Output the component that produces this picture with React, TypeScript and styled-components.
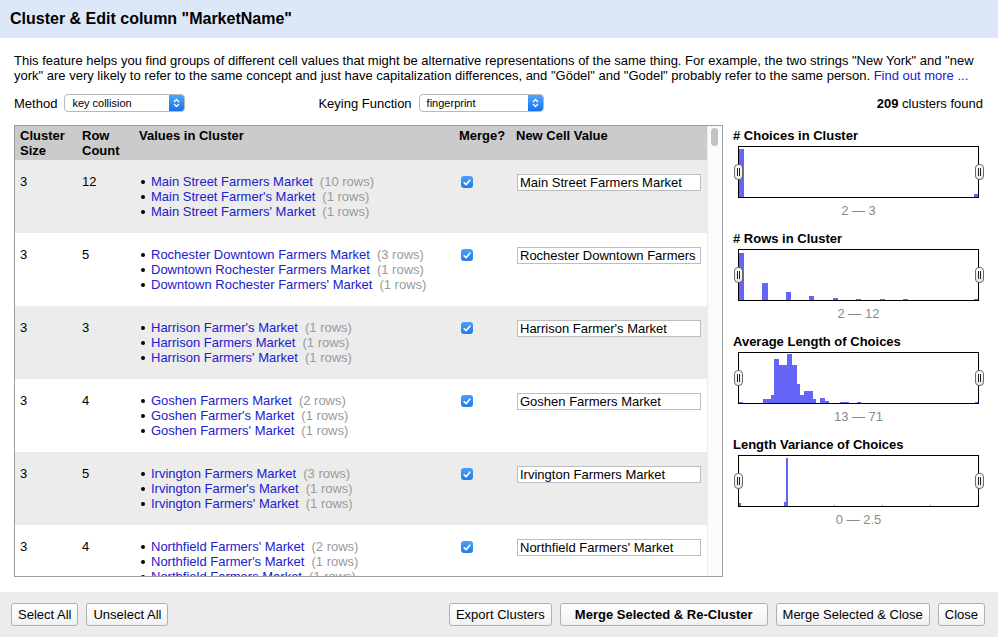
import React from 'react';
import styled, { createGlobalStyle } from 'styled-components';

// -- data --

type Cluster = {
  size: number;
  count: number;
  values: [string, number][];
  newValue: string;
};

const CLUSTERS: Cluster[] = [
  {
    size: 3,
    count: 12,
    values: [
      ['Main Street Farmers Market', 10],
      ["Main Street Farmer's Market", 1],
      ["Main Street Farmers' Market", 1],
    ],
    newValue: 'Main Street Farmers Market',
  },
  {
    size: 3,
    count: 5,
    values: [
      ['Rochester Downtown Farmers Market', 3],
      ['Downtown Rochester Farmers Market', 1],
      ["Downtown Rochester Farmers' Market", 1],
    ],
    newValue: 'Rochester Downtown Farmers Market',
  },
  {
    size: 3,
    count: 3,
    values: [
      ["Harrison Farmer's Market", 1],
      ['Harrison Farmers Market', 1],
      ["Harrison Farmers' Market", 1],
    ],
    newValue: "Harrison Farmer's Market",
  },
  {
    size: 3,
    count: 4,
    values: [
      ['Goshen Farmers Market', 2],
      ["Goshen Farmer's Market", 1],
      ["Goshen Farmers' Market", 1],
    ],
    newValue: 'Goshen Farmers Market',
  },
  {
    size: 3,
    count: 5,
    values: [
      ['Irvington Farmers Market', 3],
      ["Irvington Farmer's Market", 1],
      ["Irvington Farmers' Market", 1],
    ],
    newValue: 'Irvington Farmers Market',
  },
  {
    size: 3,
    count: 4,
    values: [
      ["Northfield Farmers' Market", 2],
      ["Northfield Farmer's Market", 1],
      ['Northfield Farmers Market', 1],
    ],
    newValue: "Northfield Farmers' Market",
  },
];

// bars are [x, width, height] inside a 239 x 50 plot
type Bar = [number, number, number];

const FACETS: { title: string; range: string; bars: Bar[] }[] = [
  {
    title: '# Choices in Cluster',
    range: '2 \u2014 3',
    bars: [
      [0, 5, 48],
      [235, 4, 3],
    ],
  },
  {
    title: '# Rows in Cluster',
    range: '2 \u2014 12',
    bars: [
      [0, 5, 47],
      [23, 6, 17],
      [47, 5, 8],
      [70, 5, 4],
      [94, 5, 2],
      [117, 5, 1],
      [141, 5, 1],
      [164, 5, 1],
      [235, 4, 1],
    ],
  },
  {
    title: 'Average Length of Choices',
    range: '13 \u2014 71',
    bars: [
      [0, 4, 1],
      [24, 8, 4],
      [32, 3, 8],
      [35, 5, 44],
      [40, 8, 38],
      [48, 5, 49],
      [53, 5, 38],
      [58, 3, 19],
      [61, 4, 8],
      [65, 9, 12],
      [74, 3, 4],
      [81, 5, 5],
      [86, 4, 2],
      [101, 9, 1],
      [118, 4, 1],
      [236, 3, 1],
    ],
  },
  {
    title: 'Length Variance of Choices',
    range: '0 \u2014 2.5',
    bars: [
      [0, 2, 3],
      [45, 2, 4],
      [47, 2, 48],
      [95, 1, 1],
      [143, 1, 1],
      [191, 1, 1],
      [238, 1, 1],
    ],
  },
];

// -- small parts --

const SelectArrows: React.FC = () => (
  <svg width="7" height="10" viewBox="0 0 7 10">
    <path d="M1 4 L3.5 1.5 L6 4 M1 6 L3.5 8.5 L6 6" fill="none" stroke="#fff" strokeWidth="1.3" />
  </svg>
);

const CheckMark: React.FC = () => (
  <svg width="8" height="7" viewBox="0 0 8 7">
    <path d="M1.2 3.8 L3.2 5.6 L6.8 1.2" fill="none" stroke="#fff" strokeWidth="1.6" strokeLinecap="round" />
  </svg>
);

const Facet: React.FC<{ title: string; range: string; bars: Bar[] }> = ({ title, range, bars }) => (
  <FacetBlock>
    <FacetTitle>{title}</FacetTitle>
    <ChartBox>
      <svg width="239" height="50" viewBox="0 0 239 50">
        {bars.map(([x, w, h], i) => (
          <rect key={i} x={x} y={50 - h} width={w} height={h} fill="#6464f6" />
        ))}
      </svg>
      <Handle side="left" />
      <Handle side="right" />
    </ChartBox>
    <RangeLabel>{range}</RangeLabel>
  </FacetBlock>
);

// -- main component --

const App: React.FC = () => {
  return (
    <>
      <GlobalStyle />
      <Dialog>
        <Header>Cluster &amp; Edit column "MarketName"</Header>
        <Body>
          <Intro>
            This feature helps you find groups of different cell values that might be alternative representations of the
            same thing. For example, the two strings "New York" and "new
            <br />
            york" are very likely to refer to the same concept and just have capitalization differences, and "Gödel" and
            "Godel" probably refer to the same person. <Link>Find out more ...</Link>
          </Intro>

          <Controls>
            <ControlGroup>
              Method
              <Select width={121}>
                <SelectText>key collision</SelectText>
                <SelectButton>
                  <SelectArrows />
                </SelectButton>
              </Select>
            </ControlGroup>
            <ControlGroup offset={133}>
              Keying Function
              <Select width={125}>
                <SelectText>fingerprint</SelectText>
                <SelectButton>
                  <SelectArrows />
                </SelectButton>
              </Select>
            </ControlGroup>
            <Found>
              <b>209</b> clusters found
            </Found>
          </Controls>

          <Main>
            <TableBox>
              <TableScroll>
                <HeadRow>
                  <HeadCell>
                    Cluster
                    <br />
                    Size
                  </HeadCell>
                  <HeadCell>
                    Row
                    <br />
                    Count
                  </HeadCell>
                  <HeadCell>Values in Cluster</HeadCell>
                  <HeadCell>Merge?</HeadCell>
                  <HeadCell>New Cell Value</HeadCell>
                </HeadRow>
                {CLUSTERS.map((c, i) => (
                  <Row key={i} shaded={i % 2 === 0}>
                    <Cell>{c.size}</Cell>
                    <Cell>{c.count}</Cell>
                    <Cell>
                      <ValueList>
                        {c.values.map(([name, n]) => (
                          <ValueItem key={name}>
                            <Link>{name}</Link>
                            <RowCount>({n} rows)</RowCount>
                          </ValueItem>
                        ))}
                      </ValueList>
                    </Cell>
                    <Cell>
                      <Check>
                        <CheckMark />
                      </Check>
                    </Cell>
                    <Cell>
                      <ValueInput defaultValue={c.newValue} />
                    </Cell>
                  </Row>
                ))}
              </TableScroll>
              <ScrollTrack>
                <ScrollThumb />
              </ScrollTrack>
            </TableBox>

            <Facets>
              {FACETS.map((f) => (
                <Facet key={f.title} {...f} />
              ))}
            </Facets>
          </Main>
        </Body>

        <Footer>
          <ButtonGroup>
            <Button>Select All</Button>
            <Button>Unselect All</Button>
          </ButtonGroup>
          <ButtonGroup>
            <Button>Export Clusters</Button>
            <Button primary>Merge Selected &amp; Re-Cluster</Button>
            <Button>Merge Selected &amp; Close</Button>
            <Button>Close</Button>
          </ButtonGroup>
        </Footer>
      </Dialog>
    </>
  );
};

// -- styled components --

const GlobalStyle = createGlobalStyle`
  html, body {
    margin: 0;
    padding: 0;
    background: #fff;
  }
  body {
    font-family: "Liberation Sans", Arial, sans-serif;
    font-size: 13px;
    color: #000;
  }
`;

const Dialog = styled.div`
  width: 998px;
  height: 637px;
  display: flex;
  flex-direction: column;
  overflow: hidden;
`;

const Header = styled.div`
  height: 38px;
  flex: none;
  display: flex;
  align-items: center;
  padding: 0 0 0 10px;
  background: #dce8f8;
  font-size: 16px;
  font-weight: bold;
`;

const Body = styled.div`
  flex: 1;
  min-height: 0;
  padding: 15px 14px 0 14px;
  display: flex;
  flex-direction: column;
`;

const Intro = styled.p`
  margin: 0;
  line-height: 15px;
  white-space: nowrap;
`;

const Link = styled.span`
  color: #2020cc;
`;

const Controls = styled.div`
  margin-top: 10px;
  height: 20px;
  display: flex;
  align-items: center;
`;

const ControlGroup = styled.div<{ offset?: number }>`
  display: flex;
  align-items: center;
  gap: 7px;
  margin-left: ${(p) => p.offset || 0}px;
`;

const Select = styled.div<{ width: number }>`
  width: ${(p) => p.width}px;
  height: 18px;
  box-sizing: border-box;
  display: flex;
  border: 1px solid #b9b9b9;
  border-radius: 4px;
  background: #fff;
  overflow: hidden;
  font-size: 11px;
`;

const SelectText = styled.div`
  flex: 1;
  padding-left: 7px;
  display: flex;
  align-items: center;
`;

const SelectButton = styled.div`
  width: 15px;
  display: flex;
  align-items: center;
  justify-content: center;
  background: linear-gradient(#52a4fb, #1873ea);
`;

const Found = styled.div`
  margin-left: auto;
  padding-right: 1px;
`;

const Main = styled.div`
  margin-top: 12px;
  display: flex;
  gap: 10px;
`;

const TableBox = styled.div`
  width: 709px;
  height: 452px;
  box-sizing: border-box;
  flex: none;
  display: flex;
  border: 1px solid #9d9d9d;
  background: #fff;
`;

const TableScroll = styled.div`
  flex: 1;
  overflow: hidden;
`;

const COLUMNS = '62px 57px 320px 57px 1fr';

const HeadRow = styled.div`
  display: grid;
  grid-template-columns: ${COLUMNS};
  height: 34px;
  background: #cbcbcb;
  font-weight: bold;
  line-height: 15px;
`;

const HeadCell = styled.div`
  padding: 2px 5px 0 5px;
`;

const Row = styled.div<{ shaded: boolean }>`
  display: grid;
  grid-template-columns: ${COLUMNS};
  height: 73px;
  box-sizing: border-box;
  padding-top: 14px;
  line-height: 15px;
  background: ${(p) => (p.shaded ? '#ececec' : '#fff')};
`;

const Cell = styled.div`
  padding: 0 5px;
  min-width: 0;
`;

const ValueList = styled.div`
  display: flex;
  flex-direction: column;
`;

const ValueItem = styled.div`
  display: flex;
  align-items: center;
  white-space: nowrap;

  &::before {
    content: '';
    width: 4px;
    height: 4px;
    border-radius: 50%;
    background: #000;
    margin: 0 6px 0 2px;
  }
`;

const RowCount = styled.span`
  color: #9a9a9a;
  margin-left: 7px;
`;

const Check = styled.span`
  margin: 2px 0 0 2px;
  width: 12px;
  height: 12px;
  border-radius: 3px;
  background: linear-gradient(#4a9ffa, #1f7de9);
  display: flex;
  align-items: center;
  justify-content: center;
`;

const ValueInput = styled.input`
  display: block;
  margin: 0 0 0 1px;
  width: 184px;
  height: 17px;
  box-sizing: border-box;
  border: 1px solid #bdbdbd;
  padding: 0 2px;
  font-family: inherit;
  font-size: 13px;
  color: #000;
  background: #fff;
  outline: none;
`;

const ScrollTrack = styled.div`
  width: 14px;
  flex: none;
  border-left: 1px solid #ebebeb;
  background: #fbfbfb;
  padding-top: 2px;
`;

const ScrollThumb = styled.div`
  width: 7px;
  height: 18px;
  margin-left: 3px;
  border-radius: 4px;
  background: #c2c2c2;
`;

const Facets = styled.div`
  flex: 1;
  padding-top: 3px;
  display: flex;
  flex-direction: column;
`;

const FacetBlock = styled.div`
  height: 103px;
  display: flex;
  flex-direction: column;
`;

const FacetTitle = styled.div`
  font-weight: bold;
  line-height: 15px;
`;

const ChartBox = styled.div`
  position: relative;
  margin: 3px 0 0 5px;
  width: 239px;
  height: 50px;
  border: 1px solid #000;
  background: #fff;

  svg {
    display: block;
  }
`;

const Handle = styled.span<{ side: 'left' | 'right' }>`
  position: absolute;
  top: 17px;
  ${(p) => (p.side === 'left' ? 'left: -5px;' : 'right: -6px;')}
  width: 9px;
  height: 16px;
  box-sizing: border-box;
  border: 1px solid #6a6a6a;
  border-radius: 4px;
  background: linear-gradient(#fff, #e6e6e6);

  &::before {
    content: '';
    position: absolute;
    left: 2px;
    top: 3px;
    width: 1px;
    height: 8px;
    border-left: 1px solid #222;
    border-right: 1px solid #222;
  }
`;

const RangeLabel = styled.div`
  width: 241px;
  margin: 5px 0 0 5px;
  text-align: center;
  color: #8a8a8a;
  line-height: 15px;
`;

const Footer = styled.div`
  height: 45px;
  flex: none;
  display: flex;
  align-items: center;
  justify-content: space-between;
  padding: 0 13px 0 11px;
  background: #ececec;
`;

const ButtonGroup = styled.div`
  display: flex;
  gap: 8px;
`;

const Button = styled.button<{ primary?: boolean }>`
  height: 23px;
  padding: 0 ${(p) => (p.primary ? 14 : 6)}px;
  border: 1px solid #b0b0b0;
  border-radius: 3px;
  background: linear-gradient(#ffffff, #f1f1f1);
  font-family: inherit;
  font-size: 13px;
  font-weight: ${(p) => (p.primary ? 'bold' : 'normal')};
  color: #000;
`;

export default App;
